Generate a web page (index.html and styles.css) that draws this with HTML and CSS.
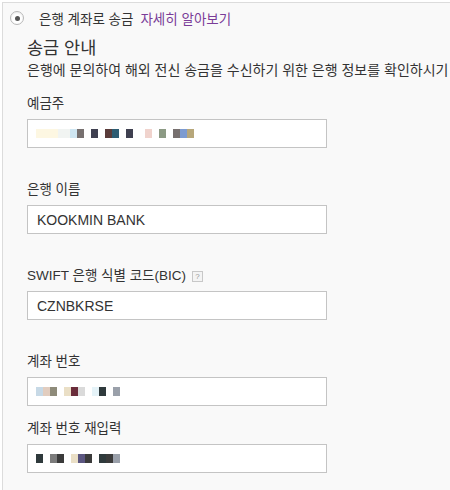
FILE: index.html
```html
<!DOCTYPE html>
<html lang="ko">
<head>
    <meta charset="UTF-8">
    <meta name="viewport" content="width=device-width, initial-scale=1.0">
    <title>은행 계좌로 송금</title>
    <link rel="stylesheet" href="styles.css">
</head>
<body>
    <div class="panel">
        <!-- Payment option -->
        <label class="option">
            <span class="radio"><span class="dot"></span></span>
            <span class="option-text">은행 계좌로 송금</span>
            <a href="#" class="more">자세히 알아보기</a>
        </label>

        <div class="section">
            <h2 class="title">송금 안내</h2>
            <p class="desc">은행에 문의하여 해외 전신 송금을 수신하기 위한 은행 정보를 확인하시기 바랍니다.</p>

            <div class="field first">
                <div class="label">예금주</div>
                <div class="input blur">
                    <span class="px w4 pale"></span><span class="px w2 pale2"></span><span class="px sky"></span><span class="px grey"></span><span class="px gap"></span><span class="px slate"></span><span class="px gap"></span><span class="px brown"></span><span class="px teal"></span><span class="px gap"></span><span class="px slate"></span><span class="px gap w2"></span><span class="px pink"></span><span class="px gap"></span><span class="px sage"></span><span class="px gap"></span><span class="px grey"></span><span class="px blue"></span><span class="px tan"></span>
                </div>
            </div>

            <div class="field">
                <div class="label">은행 이름</div>
                <div class="input">KOOKMIN BANK</div>
            </div>

            <div class="field">
                <div class="label">SWIFT 은행 식별 코드(BIC) <span class="help">?</span></div>
                <div class="input">CZNBKRSE</div>
            </div>

            <div class="field">
                <div class="label">계좌 번호</div>
                <div class="input blur">
                    <span class="px sky2"></span><span class="px peach"></span><span class="px olive"></span><span class="px gap"></span><span class="px beige"></span><span class="px maroon"></span><span class="px light"></span><span class="px gap"></span><span class="px ice"></span><span class="px dark"></span><span class="px gap"></span><span class="px grey2"></span>
                </div>
            </div>

            <div class="field confirm">
                <div class="label">계좌 번호 재입력</div>
                <div class="input blur">
                    <span class="px dark"></span><span class="px gap"></span><span class="px grey3"></span><span class="px dark2"></span><span class="px gap"></span><span class="px beige"></span><span class="px navy"></span><span class="px dark2"></span><span class="px gap"></span><span class="px dark"></span><span class="px dark2"></span><span class="px grey2"></span>
                </div>
            </div>
        </div>
    </div>
</body>
</html>
```

FILE: styles.css
```css
html, body {
    margin: 0;
    height: 100%;
    overflow: hidden;
    background: #fff;
}

body {
    font-family: "Liberation Sans", "Noto Sans CJK KR", sans-serif;
    color: #333;
    font-size: 13.5px;
}

.panel {
    margin: 2px 0 0 2px;
    height: 100%;
    border-top: 1px solid #dcdcdc;
    border-left: 1px solid #dcdcdc;
    background: #f9f9f9;
}

/* radio option row */
.option {
    display: flex;
    align-items: center;
    height: 20px;
    padding-top: 5px;
    padding-left: 7px;
    white-space: nowrap;
}

.radio {
    display: flex;
    align-items: center;
    justify-content: center;
    width: 12px;
    height: 12px;
    border: 1px solid #b8b8b8;
    border-radius: 50%;
    background: #fff;
    box-shadow: inset 0 1px 2px rgba(0, 0, 0, 0.08);
}

.dot {
    width: 5px;
    height: 5px;
    border-radius: 50%;
    background: #555;
}

.option-text {
    margin-left: 15px;
}

.more {
    margin-left: 7px;
    color: #7a3c98;
    text-decoration: none;
}

.section {
    padding-left: 24px;
}

.title {
    margin: 9px 0 0;
    font-size: 17.5px;
    font-weight: normal;
    line-height: 22px;
}

.desc {
    margin: 2px 0 0;
    font-size: 14px;
    line-height: 18px;
    white-space: nowrap;
}

.field {
    margin-top: 32px;
}

.field.first {
    margin-top: 15px;
}

.field.confirm {
    margin-top: 13px;
}

.label {
    display: flex;
    align-items: center;
    height: 20px;
    line-height: 20px;
    margin-bottom: 5px;
}

.help {
    display: inline-flex;
    align-items: center;
    justify-content: center;
    width: 9px;
    height: 9px;
    margin-left: 6px;
    border: 1px solid #c8c8c8;
    background: #f4f4f4;
    color: #999;
    font-size: 8px;
    line-height: 9px;
}

.input {
    display: flex;
    align-items: center;
    box-sizing: border-box;
    width: 300px;
    height: 29px;
    padding-left: 9px;
    border: 1px solid #c4c4c4;
    background: #fff;
    font-size: 14px;
    color: #333;
}

/* pixelated (masked) values */
.blur {
    padding-left: 8px;
}

.px {
    display: inline-block;
    width: 7px;
    height: 9px;
}

.px.w2 { width: 12px; }
.px.w4 { width: 22px; }
.gap { background: transparent; }
.pale { background: #fdf7e2; }
.pale2 { background: #f1f4f2; }
.sky { background: #cfe6f2; }
.grey { background: #77706f; }
.slate { background: #3f4050; }
.brown { background: #5a3c3a; }
.teal { background: #2d5c72; }
.pink { background: #f0d3cd; }
.sage { background: #8c9a84; }
.blue { background: #7d9bd0; }
.tan { background: #b7a77a; }
.sky2 { background: #c7d9e6; }
.peach { background: #e2cdbf; }
.olive { background: #8e8b7a; }
.beige { background: #eadfc6; }
.maroon { background: #6a2c3a; }
.light { background: #dadada; }
.ice { background: #e5f3f8; }
.dark { background: #2f3a3c; }
.dark2 { background: #3b3b3b; }
.grey2 { background: #9aa0aa; }
.grey3 { background: #7c7c7c; }
.navy { background: #5b5680; }
```
